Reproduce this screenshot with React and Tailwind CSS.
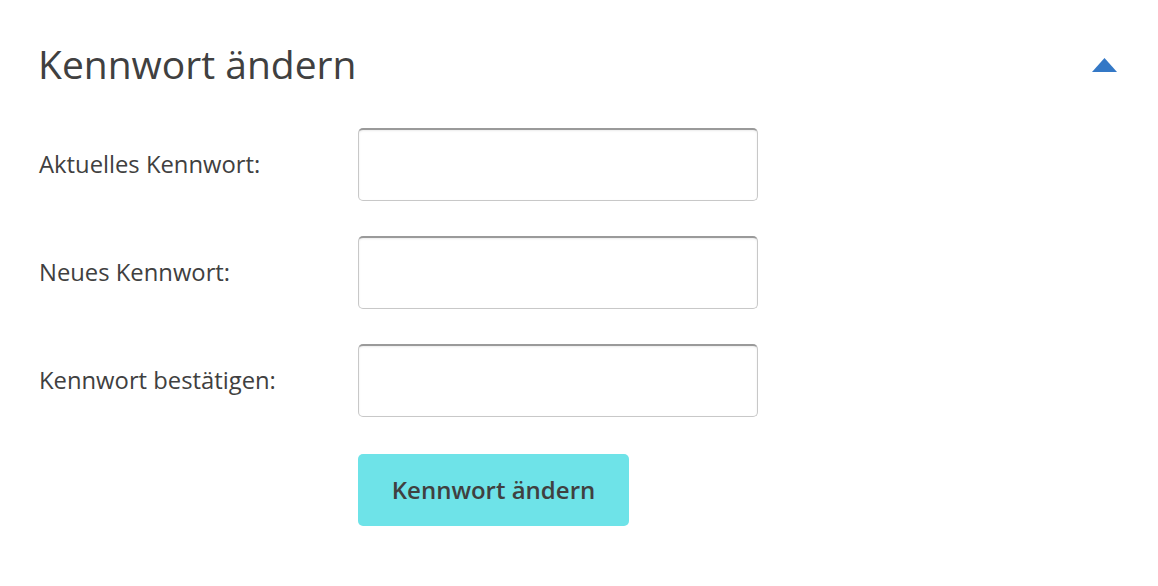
export default function App() {
    const fields = ['Aktuelles Kennwort:', 'Neues Kennwort:', 'Kennwort bestätigen:']

    return (
        <div className="w-[1158px] h-[586px] bg-white text-[#404040] font-['Open_Sans',sans-serif]">
            <div className="flex items-center justify-between pl-[38px] pr-[40px] pt-[40px]">
                <h2 className="text-[39px] leading-[48px] font-normal">Kennwort ändern</h2>
                <svg width="27" height="16" viewBox="0 0 27 16" className="mt-[2px]">
                    <polygon points="13.5,1 26,15 1,15" fill="#3478c6" />
                </svg>
            </div>

            <form className="pl-[39px] pt-[40px] flex flex-col gap-[35px]">
                {fields.map(label => (
                    <div key={label} className="flex items-center">
                        <label className="w-[319px] text-[23.8px]">{label}</label>
                        <input
                            type="password"
                            className="w-[400px] h-[73px] border border-[#c8c8c8] border-t-[#9a9a9a] border-t-2 rounded-[5px] bg-white outline-none shadow-[inset_0_1px_2px_rgba(0,0,0,0.08)]"
                        />
                    </div>
                ))}
                <div className="flex pl-[319px] pt-[2px]">
                    <button
                        type="button"
                        className="w-[271px] h-[72px] rounded-[5px] bg-[#6ee3e8] text-[24px] font-semibold text-[#404040]"
                    >
                        Kennwort ändern
                    </button>
                </div>
            </form>
        </div>
    )
}
